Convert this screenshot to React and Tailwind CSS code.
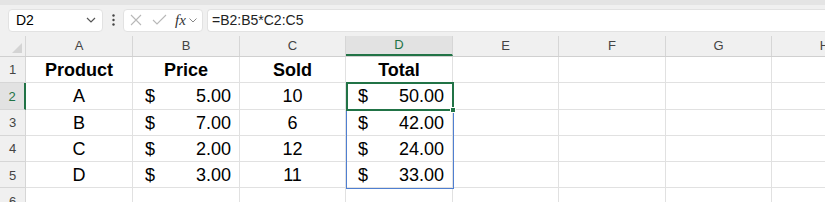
import React from "react";

const cols = [
  { l: "A", w: 107 },
  { l: "B", w: 107 },
  { l: "C", w: 106 },
  { l: "D", w: 107 },
  { l: "E", w: 106 },
  { l: "F", w: 107 },
  { l: "G", w: 106 },
  { l: "H", w: 106 },
];

const rows = [
  { n: 1, a: "Product", b: null, c: "Sold", d: null, head: true },
  { n: 2, a: "A", b: "5.00", c: "10", d: "50.00" },
  { n: 3, a: "B", b: "7.00", c: "6", d: "42.00" },
  { n: 4, a: "C", b: "2.00", c: "12", d: "24.00" },
  { n: 5, a: "D", b: "3.00", c: "11", d: "33.00" },
  { n: 6 },
];

function Money({ v }) {
  return (
    <div className="flex w-full items-center justify-between pl-[12px] pr-[8px]">
      <span>$</span>
      <span>{v}</span>
    </div>
  );
}

export default function App() {
  return (
    <div
      className="w-[825px] h-[202px] overflow-hidden bg-[#f0f0f0] text-black"
      style={{ fontFamily: '"Liberation Sans", Arial, sans-serif' }}
    >
      <div className="h-[5px] bg-[#e4e4e4]" />
      {/* formula bar */}
      <div className="flex h-[26px] items-center mt-[2px]">
        <div className="ml-[8px] flex h-[23px] w-[95px] items-center justify-between rounded-[4px] border border-[#e2e2e2] bg-white pl-[7px] pr-[6px] text-[14px]">
          <span>D2</span>
          <svg width="10" height="6" viewBox="0 0 10 6" fill="none" stroke="#555" strokeWidth="1.2">
            <path d="M1 1l4 4 4-4" />
          </svg>
        </div>
        <div className="flex w-[20px] justify-center">
          <svg width="3" height="12" viewBox="0 0 3 12" fill="#444">
            <circle cx="1.5" cy="1.5" r="1.2" />
            <circle cx="1.5" cy="6" r="1.2" />
            <circle cx="1.5" cy="10.5" r="1.2" />
          </svg>
        </div>
        <div className="flex h-[23px] w-[80px] items-center rounded-[4px] border border-[#e2e2e2] bg-white pl-[5px]">
          <svg width="14" height="14" viewBox="0 0 14 14" fill="none" stroke="#b8b8b8" strokeWidth="1.1">
            <path d="M2 2l10 10M12 2L2 12" />
          </svg>
          <svg className="ml-[9px]" width="15" height="12" viewBox="0 0 15 12" fill="none" stroke="#b8b8b8" strokeWidth="1.1">
            <path d="M1 6l4 4 9-9" />
          </svg>
          <span
            className="ml-[8px] text-[15px] italic text-[#333]"
            style={{ fontFamily: '"Liberation Serif", "Times New Roman", serif' }}
          >
            fx
          </span>
          <svg className="ml-[3px]" width="8" height="5" viewBox="0 0 8 5" fill="none" stroke="#888" strokeWidth="1">
            <path d="M0.5 0.5l3.5 3.5 3.5-3.5" />
          </svg>
        </div>
        <div className="ml-[4px] flex h-[23px] flex-1 items-center rounded-l-[4px] border border-r-0 border-[#e2e2e2] bg-white pl-[4px] text-[14px] text-[#222]">
          =B2:B5*C2:C5
        </div>
      </div>
      {/* grid */}
      <div className="relative mt-[3px] bg-white">
        {/* header row */}
        <div className="flex h-[21px] bg-[#f0f0f0] border-b border-[#d0d0d0]">
          <div className="relative w-[26px] shrink-0 border-r border-[#d6d6d6]">
            <div
              className="absolute bottom-[3px] right-[3px] h-0 w-0"
              style={{ borderLeft: "10px solid transparent", borderBottom: "10px solid #d4d4d4" }}
            />
          </div>
          {cols.map((c) => (
            <div
              key={c.l}
              style={{ width: c.w }}
              className={
                c.l === "D"
                  ? "shrink-0 flex items-center justify-center border-r border-[#d6d6d6] bg-[#e2e2e2] text-[13px] text-[#217346] border-b-2 border-b-[#217346]"
                  : "shrink-0 flex items-center justify-center border-r border-[#d6d6d6] text-[13px] text-[#444]"
              }
            >
              {c.l}
            </div>
          ))}
        </div>
        {rows.map((r) => (
          <div key={r.n} className="flex h-[26.3px] text-[18px]">
            <div
              className={
                r.n === 2
                  ? "w-[26px] shrink-0 flex items-center justify-center pt-[1px] bg-[#e2e2e2] border-r-2 border-[#217346] border-b border-b-[#d6d6d6] text-[13px] text-[#217346]"
                  : "w-[26px] shrink-0 flex items-center justify-center pt-[1px] bg-[#f0f0f0] border-r border-[#d6d6d6] border-b border-b-[#d6d6d6] text-[13px] text-[#444]"
              }
            >
              {r.n}
            </div>
            {cols.map((c) => {
              let content = null;
              if (r.a !== undefined) {
                if (c.l === "A") content = <span className={r.head ? "font-bold" : ""}>{r.a}</span>;
                if (c.l === "B") content = r.head ? <span className="font-bold">Price</span> : <Money v={r.b} />;
                if (c.l === "C") content = <span className={r.head ? "font-bold" : ""}>{r.c}</span>;
                if (c.l === "D") content = r.head ? <span className="font-bold">Total</span> : <Money v={r.d} />;
              }
              return (
                <div
                  key={c.l}
                  style={{ width: c.w }}
                  className="shrink-0 flex items-center justify-center pt-[2px] border-r border-b border-[#e1e1e1]"
                >
                  {content}
                </div>
              );
            })}
          </div>
        ))}
        {/* selection: D3:D5 range */}
        <div className="pointer-events-none absolute left-[346px] top-[73.6px] h-[79.9px] w-[108px] border border-[#4f7fd1]" />
        {/* active cell D2 */}
        <div className="pointer-events-none absolute left-[346px] top-[46.3px] h-[28.3px] w-[108px] border-2 border-[#217346]">
          <div className="absolute -bottom-[4px] -right-[4px] h-[6px] w-[6px] border border-white bg-[#217346]" />
        </div>
      </div>
    </div>
  );
}
